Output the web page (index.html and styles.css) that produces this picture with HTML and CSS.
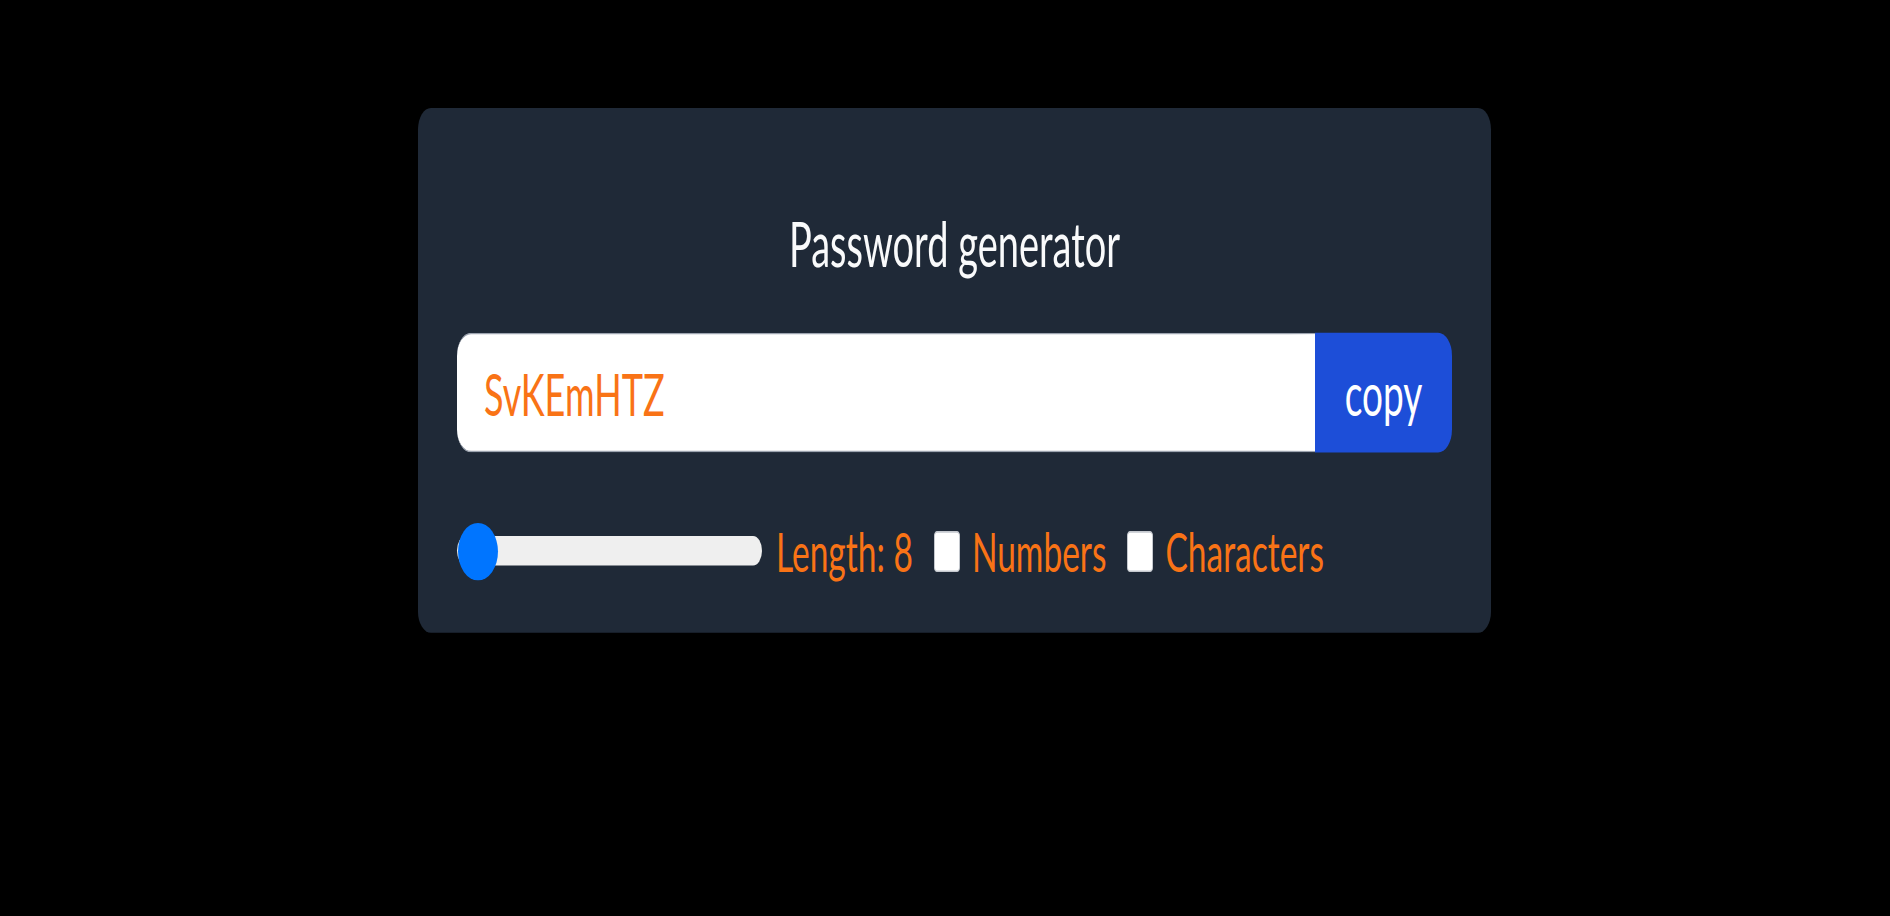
FILE: index.html
```html
<!DOCTYPE html>
<html lang="en">
<head>
<meta charset="utf-8">
<title>Password generator</title>
<link rel="stylesheet" href="styles.css">
</head>
<body>
<main class="page">
  <section class="card">
    <h1 class="title">Password generator</h1>
    <div class="output-row">
      <input class="password" type="text" value="SvKEmHTZ" readonly>
      <button class="copy-btn" type="button">copy</button>
    </div>
    <div class="options">
      <input class="length-range" type="range" min="8" max="50" value="8">
      <span class="opt-label length-label">Length: 8</span>
      <input class="opt-check" type="checkbox" id="numbers">
      <label class="opt-label" for="numbers">Numbers</label>
      <input class="opt-check" type="checkbox" id="characters">
      <label class="opt-label" for="characters">Characters</label>
    </div>
  </section>
</main>
</body>
</html>
```

FILE: styles.css
```css
html, body {
  margin: 0;
  padding: 0;
  background: #000;
}

body {
  font-family: "Lato", "Liberation Sans", sans-serif;
  min-height: 916px;
}

.page {
  display: flex;
  justify-content: center;
  align-items: flex-start;
  padding: 108px 0 0 19px;
}

.card {
  box-sizing: border-box;
  width: 1073px;
  height: 320px;
  padding: 60px 39px 31px;
  background: #1f2937;
  border-radius: 13px;
  transform: scaleY(1.64);
  transform-origin: top center;
  display: flex;
  flex-direction: column;
}

.title {
  margin: 0;
  font-size: 38px;
  line-height: 44px;
  font-weight: 400;
  color: #f9fafb;
  text-align: center;
}

.output-row {
  display: flex;
  margin-top: 33px;
  height: 73px;
}

.password {
  flex: 1;
  min-width: 0;
  box-sizing: border-box;
  height: 73px;
  margin: 0;
  padding: 0 0 0 27px;
  border: none;
  border-top: 1px solid #9ca3af;
  border-bottom: 1px solid #9ca3af;
  border-radius: 14px 0 0 14px;
  background: #fff;
  color: #f97316;
  font-family: inherit;
  font-size: 36px;
  outline: none;
}

.copy-btn {
  width: 137px;
  height: 73px;
  margin: 0;
  padding: 0;
  border: none;
  border-radius: 0 14px 14px 0;
  background: #1d4ed8;
  color: #fff;
  font-family: inherit;
  font-size: 37px;
}

.options {
  display: flex;
  align-items: center;
  margin-top: 42px;
  height: 36px;
}

.length-range {
  -webkit-appearance: none;
  appearance: none;
  width: 305px;
  height: 18px;
  margin: 0 14px 0 0;
  border-radius: 9px;
  background: #efefef;
}

.length-range::-webkit-slider-thumb {
  -webkit-appearance: none;
  appearance: none;
  width: 40px;
  height: 35px;
  margin-left: 1px;
  border-radius: 50%;
  background: #0075ff;
  border: none;
}

.opt-label {
  font-size: 33.5px;
  line-height: 36px;
  color: #f97316;
}

.opt-check {
  -webkit-appearance: none;
  appearance: none;
  box-sizing: border-box;
  width: 26px;
  height: 25px;
  margin: 0 12px 0 21px;
  border: 1px solid #c4c8ce;
  border-radius: 3px;
  background: #fff;
}
```
